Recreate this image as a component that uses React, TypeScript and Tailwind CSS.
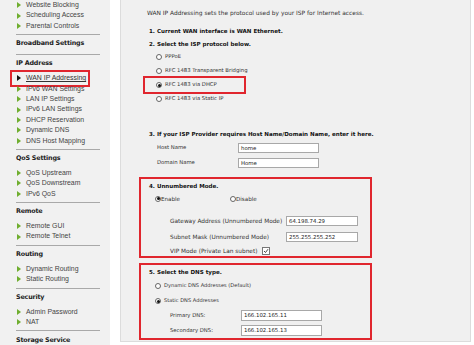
import type { ReactNode } from 'react';

const sideFont = { fontFamily: '"Liberation Sans", Arial, sans-serif' };
const vFont = { fontFamily: '"DejaVu Sans", Verdana, sans-serif' };

type Group = { title?: string; items: string[]; active?: string };

const groups: Group[] = [
  { items: ['Website Blocking', 'Scheduling Access', 'Parental Controls'] },
  { title: 'Broadband Settings', items: [] },
  {
    title: 'IP Address',
    items: [
      'WAN IP Addressing',
      'IPv6 WAN Settings',
      'LAN IP Settings',
      'IPv6 LAN Settings',
      'DHCP Reservation',
      'Dynamic DNS',
      'DNS Host Mapping',
    ],
    active: 'WAN IP Addressing',
  },
  { title: 'QoS Settings', items: ['QoS Upstream', 'QoS Downstream', 'IPv6 QoS'] },
  { title: 'Remote', items: ['Remote GUI', 'Remote Telnet'] },
  { title: 'Routing', items: ['Dynamic Routing', 'Static Routing'] },
  { title: 'Security', items: ['Admin Password', 'NAT'] },
  { title: 'Storage Service', items: [] },
];

function Bullet({ active }: { active?: boolean }) {
  return (
    <svg width="4" height="6" viewBox="0 0 4 6" className="shrink-0">
      <path d="M0 0 L4 3 L0 6 Z" fill={active ? '#111111' : '#6fae2f'} />
    </svg>
  );
}

function Sidebar() {
  return (
    <div className="w-[110px] shrink-0 bg-[#f1f1f1] h-[345px] overflow-hidden">
      {groups.map((g, gi) => (
        <div key={gi}>
          {g.title && (
            <div
              className="h-[10px] mt-[4px] pl-[16px] flex items-center text-[6.4px] font-bold text-[#222] tracking-[-0.2px] whitespace-nowrap"
              style={vFont}
            >
              {g.title}
            </div>
          )}
          {g.items.length > 0 && (
            <div className={g.title ? 'mt-[4px]' : ''}>
              {g.items.map((it) => (
                <div
                  key={it}
                  className="relative h-[10.4px] pl-[17px] flex items-center gap-[5px] text-[6.9px] text-[#444] whitespace-nowrap"
                  style={sideFont}
                >
                  <Bullet active={it === g.active} />
                  <span className={it === g.active ? 'underline text-[#333]' : ''}>{it}</span>
                  {it === g.active && (
                    <div className="absolute left-[10px] top-[-3px] w-[80px] h-[17px] border-2 border-[#e0262e]" />
                  )}
                </div>
              ))}
            </div>
          )}
          <div
            className={`${g.items.length > 0 ? 'mt-[3px]' : 'mt-[5px]'} ml-[16px] w-[84px] h-px bg-[#a9a9a9]`}
          />
        </div>
      ))}
    </div>
  );
}

function Radio({ checked }: { checked?: boolean }) {
  return (
    <span className="w-[6px] h-[6px] rounded-full border border-[#666] bg-white flex items-center justify-center shrink-0">
      {checked && <span className="w-[3px] h-[3px] rounded-full bg-[#111]" />}
    </span>
  );
}

function Field({ value, w, h = 10 }: { value: string; w: number; h?: number }) {
  return (
    <div
      className={`bg-white border border-[#a8a8a8] pl-[2px] flex items-center text-[5.4px] text-[#222] ${
        h === 11 ? 'h-[11px]' : 'h-[10px]'
      }`}
      style={{ width: w }}
    >
      {value}
    </div>
  );
}

function Bold({ children, className = '' }: { children: ReactNode; className?: string }) {
  return (
    <div className={`h-[10px] flex items-center text-[5.55px] font-bold text-[#111] whitespace-nowrap ${className}`}>
      {children}
    </div>
  );
}

function RadioRow({ label, checked, boxed }: { label: string; checked?: boolean; boxed?: boolean }) {
  return (
    <div className="relative h-[14px] pl-[35px] flex items-center gap-[3px] text-[5.3px] text-[#333]">
      <Radio checked={checked} />
      <span>{label}</span>
      {boxed && <div className="absolute left-[22px] top-[-2px] w-[103px] h-[18px] border-2 border-[#e0262e]" />}
    </div>
  );
}

export default function App() {
  return (
    <div className="w-[474px] h-[345px] bg-white flex overflow-hidden" style={vFont}>
      <Sidebar />
      <div className="w-[10px] shrink-0" />
      <div className="w-[351px] h-[342px] shrink-0 bg-[#f0f0f0] border-l border-r border-b border-[#dcdcdc] pt-[8px]">
        <div className="h-[10px] pl-[26px] flex items-center text-[5.9px] text-[#333] whitespace-nowrap">
          WAN IP Addressing sets the protocol used by your ISP for Internet access.
        </div>
        <Bold className="mt-[8px] pl-[28px]">1. Current WAN interface is WAN Ethernet.</Bold>
        <Bold className="mt-[3px] pl-[28px]">2. Select the ISP protocol below.</Bold>
        <div className="mt-[1px]">
          <RadioRow label="PPPoE" />
          <RadioRow label="RFC 1483 Transparent Bridging" />
          <RadioRow label="RFC 1483 via DHCP" checked boxed />
          <RadioRow label="RFC 1483 via Static IP" />
        </div>
        <Bold className="mt-[23px] pl-[28px]">3. If your ISP Provider requires Host Name/Domain Name, enter it here.</Bold>
        <div className="mt-[4px] pl-[36px] flex items-center text-[5.3px] text-[#333]">
          <span className="w-[81px]">Host Name</span>
          <Field value="home" w={81} />
        </div>
        <div className="mt-[5px] pl-[36px] flex items-center text-[5.3px] text-[#333]">
          <span className="w-[81px]">Domain Name</span>
          <Field value="Home" w={81} />
        </div>

        <div className="mt-[9px] ml-[18px] w-[233px] h-[81px] border-2 border-[#e0262e] pt-[2px] pl-[8px]">
          <Bold>4. Unnumbered Mode.</Bold>
          <div className="mt-[3px] h-[10px] pl-[6px] flex items-center text-[5.6px] text-[#333]">
            <div className="w-[75px] flex items-center">
              <Radio checked />
              <span>Enable</span>
            </div>
            <Radio />
            <span>Disable</span>
          </div>
          <div className="mt-[12px] pl-[21px] flex items-center text-[5.8px] text-[#333]">
            <span className="w-[116px] whitespace-nowrap">Gateway Address (Unnumbered Mode)</span>
            <Field value="64.198.74.29" w={72} />
          </div>
          <div className="mt-[6px] pl-[21px] flex items-center text-[5.8px] text-[#333]">
            <span className="w-[116px] whitespace-nowrap">Subnet Mask (Unnumbered Mode)</span>
            <Field value="255.255.255.252" w={72} />
          </div>
          <div className="mt-[4px] h-[10px] pl-[21px] flex items-center gap-[5px] text-[5.8px] text-[#333]">
            <span className="whitespace-nowrap">VIP Mode (Private Lan subnet)</span>
            <span className="w-[8px] h-[8px] border border-[#777] bg-white flex items-center justify-center">
              <svg width="6" height="6" viewBox="0 0 6 6">
                <path d="M1 3 L2.5 4.5 L5 1.2" stroke="#333" strokeWidth="0.9" fill="none" />
              </svg>
            </span>
          </div>
        </div>

        <div className="mt-[5px] ml-[18px] w-[233px] h-[77px] border-2 border-[#e0262e] pt-[2px] pl-[8px]">
          <Bold>5. Select the DNS type.</Bold>
          <div className="mt-[4px] h-[10px] pl-[6px] flex items-center gap-[3px] text-[5.1px] text-[#333]">
            <Radio />
            <span>Dynamic DNS Addresses (Default)</span>
          </div>
          <div className="mt-[5px] h-[10px] pl-[6px] flex items-center gap-[3px] text-[5.1px] text-[#333]">
            <Radio checked />
            <span>Static DNS Addresses</span>
          </div>
          <div className="mt-[4px] pl-[21px] flex items-center text-[5.3px] text-[#333]">
            <span className="w-[71px]">Primary DNS:</span>
            <Field value="166.102.165.11" w={81} h={11} />
          </div>
          <div className="mt-[4px] pl-[21px] flex items-center text-[5.3px] text-[#333]">
            <span className="w-[71px]">Secondary DNS:</span>
            <Field value="166.102.165.13" w={81} h={11} />
          </div>
        </div>
      </div>
    </div>
  );
}
